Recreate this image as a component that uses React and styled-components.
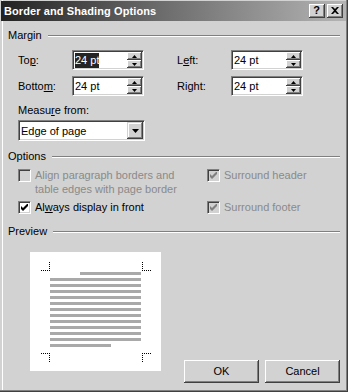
import React from 'react';
import styled, { createGlobalStyle } from 'styled-components';

const FACE = '#d2d2d2';
const SHADOW = '#808080';
const DARK = '#404040';

const Global = createGlobalStyle`
  html, body { margin: 0; padding: 0; background: ${FACE}; }
  body {
    font-family: "Liberation Sans", Arial, sans-serif;
    font-size: 11px;
    color: #000;
  }
`;

const Window = styled.div`
  width: 348px;
  height: 392px;
  box-sizing: border-box;
  padding: 1px 2px 3px 1px;
  background: ${FACE};
  box-shadow: inset -1px -1px 0 ${DARK}, inset -2px -2px 0 ${SHADOW}, inset 2px 0 0 ${FACE}, inset 3px 0 0 #fff;
  display: flex;
  flex-direction: column;
`;

const TitleBar = styled.div`
  height: 20px;
  display: flex;
  align-items: center;
  padding: 0 3px 0 3px;
  background: linear-gradient(to right, #222 0%, #6a6a6a 45%, #b4b4b4 100%);
`;

const Title = styled.div`
  color: #fff;
  font-weight: bold;
  font-size: 11px;
  letter-spacing: 0.1px;
`;

const CaptionButtons = styled.div`
  margin-left: auto;
  display: flex;
  gap: 2px;
`;

const CaptionButton = styled.div`
  width: 16px;
  height: 14px;
  box-sizing: border-box;
  background: ${FACE};
  box-shadow: inset -1px -1px 0 ${DARK}, inset 1px 1px 0 #fff, inset -2px -2px 0 ${SHADOW};
  display: flex;
  align-items: center;
  justify-content: center;
  font-weight: bold;
  font-size: 11px;
  line-height: 1;
  padding: 0 1px 1px 0;
`;

const Body = styled.div`
  flex: 1;
  display: flex;
  flex-direction: column;
  padding: 0 6px 0 7px;
`;

const GroupHeader = styled.div`
  display: flex;
  align-items: center;
  gap: 6px;
  line-height: 13px;
  margin-top: ${p => p.$top}px;
`;

const GroupLine = styled.div`
  flex: 1;
  height: 0;
  border-top: 1px solid ${SHADOW};
  border-bottom: 1px solid #fff;
  margin-top: 1px;
`;

const MarginRows = styled.div`
  display: flex;
  flex-direction: column;
  gap: 6px;
  margin-top: 8px;
  padding-left: 10px;
`;

const Row = styled.div`
  display: flex;
`;

const Pair = styled.div`
  display: flex;
  align-items: center;
  width: 159px;
`;

const Label = styled.span`
  width: ${p => p.$w || 54}px;
  line-height: 13px;
`;

const Field = styled.div`
  width: ${p => p.$w}px;
  height: ${p => p.$h}px;
  box-sizing: border-box;
  background: #fff;
  border-style: solid;
  border-width: 1px;
  border-color: ${SHADOW} #fff #fff ${SHADOW};
  box-shadow: inset 1px 1px 0 ${DARK}, inset -1px -1px 0 ${FACE};
  padding: 1px;
  display: flex;
  align-items: stretch;
`;

const FieldText = styled.div`
  flex: 1;
  display: flex;
  align-items: center;
  padding-left: 1px;
`;

const Selected = styled.span`
  background: #242424;
  color: #fff;
  padding: 1px 0;
  line-height: 13px;
`;

const SpinCol = styled.div`
  width: 15px;
  display: flex;
  flex-direction: column;
`;

const SpinButton = styled.div`
  flex: 1;
  background: ${FACE};
  box-shadow: inset -1px -1px 0 ${DARK}, inset 1px 1px 0 #fff, inset -2px -2px 0 ${SHADOW};
  display: flex;
  align-items: center;
  justify-content: center;
  padding-right: 1px;
`;

const DropButton = styled.div`
  width: 16px;
  background: ${FACE};
  box-shadow: inset -1px -1px 0 ${DARK}, inset 1px 1px 0 ${FACE}, inset -2px -2px 0 ${SHADOW}, inset 2px 2px 0 #fff;
  display: flex;
  align-items: center;
  justify-content: center;
`;

const MeasureBlock = styled.div`
  display: flex;
  flex-direction: column;
  gap: 3px;
  margin-top: 8px;
  padding-left: 10px;
`;

const OptionsGrid = styled.div`
  display: grid;
  grid-template-columns: 189px 1fr;
  row-gap: 4px;
  margin-top: 5px;
  padding-left: 10px;
`;

const Check = styled.label`
  display: flex;
  align-items: flex-start;
  gap: 4px;
  line-height: 14px;
  color: ${p => (p.$disabled ? '#8a8a8a' : '#000')};
`;

const Box = styled.span`
  flex: none;
  width: 13px;
  height: 13px;
  box-sizing: border-box;
  margin-top: 1px;
  background: ${p => (p.$disabled ? FACE : '#fff')};
  border-style: solid;
  border-width: 1px;
  border-color: ${SHADOW} #fff #fff ${SHADOW};
  box-shadow: inset 1px 1px 0 ${DARK}, inset -1px -1px 0 ${FACE};
  display: flex;
  align-items: center;
  justify-content: center;
`;

const Footer = styled.div`
  display: flex;
  align-items: flex-end;
  margin-top: 14px;
  padding-left: 22px;
`;

const PreviewPage = styled.div`
  width: 131px;
  height: 119px;
  background: #fff;
  margin-bottom: 12px;
  display: flex;
`;

const Buttons = styled.div`
  margin-left: auto;
  display: flex;
  gap: 6px;
`;

const PushButton = styled.button`
  width: 75px;
  height: 23px;
  border: none;
  background: ${FACE};
  box-shadow: inset -1px -1px 0 ${DARK}, inset 1px 1px 0 #fff, inset -2px -2px 0 ${SHADOW};
  font-family: inherit;
  font-size: 11px;
  color: #000;
  padding: 0 0 1px 0;
`;

const U = styled.span`
  text-decoration: underline;
`;

const UpArrow = () => (
  <svg width="5" height="3" viewBox="0 0 5 3"><path d="M2.5 0 L5 3 L0 3 Z" fill="#000" /></svg>
);
const DownArrow = ({ w = 5, h = 3 }) => (
  <svg width={w} height={h} viewBox={`0 0 ${w} ${h}`}><path d={`M0 0 L${w} 0 L${w / 2} ${h} Z`} fill="#000" /></svg>
);

const CheckMark = ({ color }) => (
  <svg width="7" height="7" viewBox="0 0 7 7">
    <path d="M0 2 L2 4 L6 0 L7 0 L7 2 L2 7 L0 5 Z" fill={color} />
  </svg>
);

const Spinner = ({ value, selected }) => (
  <Field $w={72} $h={20}>
    <FieldText>{selected ? <Selected>{value}</Selected> : value}</FieldText>
    <SpinCol>
      <SpinButton><UpArrow /></SpinButton>
      <SpinButton><DownArrow /></SpinButton>
    </SpinCol>
  </Field>
);

const CheckBox = ({ checked, disabled, children }) => (
  <Check $disabled={disabled}>
    <Box $disabled={disabled}>{checked && <CheckMark color={disabled ? '#808080' : '#000'} />}</Box>
    <span>{children}</span>
  </Check>
);

const Corner = ({ x, y, dx, dy }) => {
  // L-shaped dotted mark; corner point at (x,y), arms go dx horizontally and dy vertically
  const dots = [];
  for (let i = 0; i <= 8; i += 2) {
    dots.push(<rect key={'h' + i} x={x + Math.sign(dx) * i} y={y} width="1" height="1" />);
    if (i > 0) dots.push(<rect key={'v' + i} x={x} y={y + Math.sign(dy) * i} width="1" height="1" />);
  }
  return <g fill="#000">{dots}</g>;
};

const PreviewDrawing = () => {
  const lines = [];
  for (let i = 0; i < 11; i++) {
    lines.push(<rect key={i} x="20" y={26 + i * 6} width="91" height="3" />);
  }
  return (
    <svg width="131" height="119" viewBox="0 0 131 119">
      <Corner x={19} y={18} dx={-1} dy={-1} />
      <Corner x={112} y={18} dx={1} dy={-1} />
      <Corner x={19} y={101} dx={-1} dy={1} />
      <Corner x={112} y={101} dx={1} dy={1} />
      <g fill="#a9a9a9">
        <rect x="50" y="20" width="61" height="3" />
        {lines}
        <rect x="20" y="92" width="61" height="3" />
      </g>
    </svg>
  );
};

export default function App() {
  return (
    <>
      <Global />
      <Window>
        <TitleBar>
          <Title>Border and Shading Options</Title>
          <CaptionButtons>
            <CaptionButton>?</CaptionButton>
            <CaptionButton>
              <svg width="8" height="7" viewBox="0 0 8 7">
                <path d="M0 0 L2 0 L4 2 L6 0 L8 0 L5 3.5 L8 7 L6 7 L4 5 L2 7 L0 7 L3 3.5 Z" fill="#000" />
              </svg>
            </CaptionButton>
          </CaptionButtons>
        </TitleBar>
        <Body>
          <GroupHeader $top={8}>
            <span>Margin</span>
            <GroupLine />
          </GroupHeader>
          <MarginRows>
            <Row>
              <Pair>
                <Label>To<U>p</U>:</Label>
                <Spinner value="24 pt" selected />
              </Pair>
              <Pair>
                <Label>L<U>e</U>ft:</Label>
                <Spinner value="24 pt" />
              </Pair>
            </Row>
            <Row>
              <Pair>
                <Label>Botto<U>m</U>:</Label>
                <Spinner value="24 pt" />
              </Pair>
              <Pair>
                <Label>Ri<U>g</U>ht:</Label>
                <Spinner value="24 pt" />
              </Pair>
            </Row>
          </MarginRows>
          <MeasureBlock>
            <Label $w={140}>Measu<U>r</U>e from:</Label>
            <Field $w={127} $h={21}>
              <FieldText>Edge of page</FieldText>
              <DropButton><DownArrow w={7} h={4} /></DropButton>
            </Field>
          </MeasureBlock>
          <GroupHeader $top={9}>
            <span>Options</span>
            <GroupLine />
          </GroupHeader>
          <OptionsGrid>
            <CheckBox disabled>Align paragraph borders and<br />table edges with page border</CheckBox>
            <CheckBox disabled checked>Surround header</CheckBox>
            <CheckBox checked>Al<U>w</U>ays display in front</CheckBox>
            <CheckBox disabled checked>Surround footer</CheckBox>
          </OptionsGrid>
          <GroupHeader $top={11}>
            <span>Preview</span>
            <GroupLine />
          </GroupHeader>
          <Footer>
            <PreviewPage>
              <PreviewDrawing />
            </PreviewPage>
            <Buttons>
              <PushButton>OK</PushButton>
              <PushButton>Cancel</PushButton>
            </Buttons>
          </Footer>
        </Body>
      </Window>
    </>
  );
}
